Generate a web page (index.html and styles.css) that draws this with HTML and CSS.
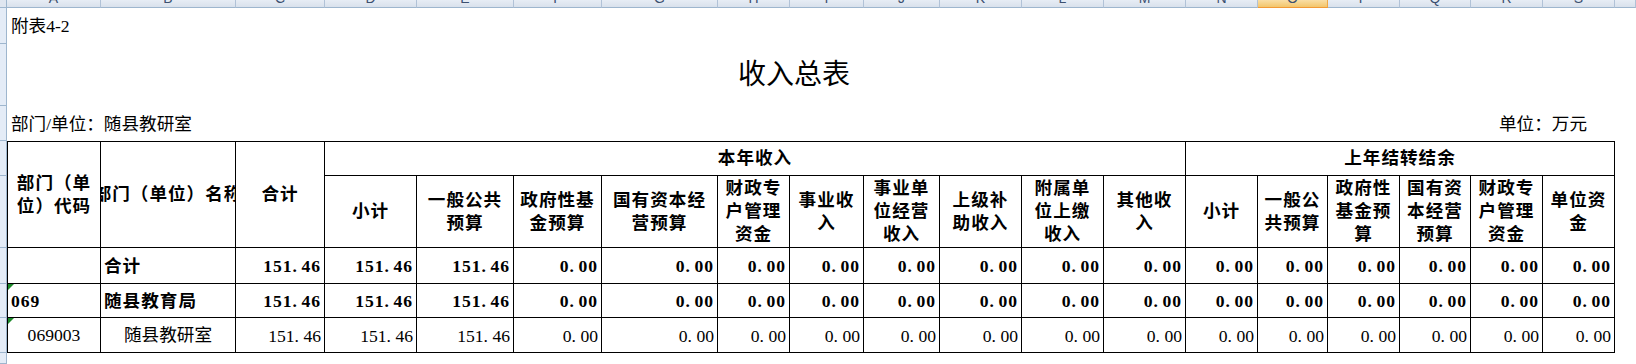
FILE: index.html
```html
<!DOCTYPE html>
<html lang="zh-CN">
<head>
<meta charset="utf-8">
<title>收入总表</title>
<link rel="stylesheet" href="styles.css">
</head>
<body>
<div class="sheet">
  <div class="corner"></div>
  <div class="ch"><span>A</span></div>
  <div class="ch"><span>B</span></div>
  <div class="ch"><span>C</span></div>
  <div class="ch"><span>D</span></div>
  <div class="ch"><span>E</span></div>
  <div class="ch"><span>F</span></div>
  <div class="ch"><span>G</span></div>
  <div class="ch"><span>H</span></div>
  <div class="ch"><span>I</span></div>
  <div class="ch"><span>J</span></div>
  <div class="ch"><span>K</span></div>
  <div class="ch"><span>L</span></div>
  <div class="ch"><span>M</span></div>
  <div class="ch"><span>N</span></div>
  <div class="ch sel"><span>O</span></div>
  <div class="ch"><span>P</span></div>
  <div class="ch"><span>Q</span></div>
  <div class="ch"><span>R</span></div>
  <div class="ch"><span>S</span></div>
  <div class="ch"><span></span></div>

  <div class="rh"></div>
  <div class="p span19">附表4-2</div>

  <div class="rh"></div>
  <div class="title span19">收入总表</div>

  <div class="rh"></div>
  <div class="p span17">部门/单位：随县教研室</div>
  <div class="p unit span2">单位：万元</div>

  <div class="rh"></div>
  <div class="c hd l t rs2">部门（单位）代码</div>
  <div class="c hd t rs2 clip"><span>部门（单位）名称</span></div>
  <div class="c hd t rs2">合计</div>
  <div class="c hd t span10">本年收入</div>
  <div class="c hd t span6">上年结转结余</div>

  <div class="rh"></div>
  <div class="c hd">小计</div>
  <div class="c hd">一般公共预算</div>
  <div class="c hd">政府性基金预算</div>
  <div class="c hd">国有资本经营预算</div>
  <div class="c hd">财政专户管理资金</div>
  <div class="c hd">事业收入</div>
  <div class="c hd">事业单位经营收入</div>
  <div class="c hd">上级补助收入</div>
  <div class="c hd">附属单位上缴收入</div>
  <div class="c hd">其他收入</div>
  <div class="c hd">小计</div>
  <div class="c hd">一般公共预算</div>
  <div class="c hd">政府性基金预算</div>
  <div class="c hd">国有资本经营预算</div>
  <div class="c hd">财政专户管理资金</div>
  <div class="c hd">单位资金</div>

  <div class="rh"></div>
  <div class="c l b txt"></div>
  <div class="c b txt">合计</div>
  <div class="c b num">151<span class="pt">.</span>46</div>
  <div class="c b num">151<span class="pt">.</span>46</div>
  <div class="c b num">151<span class="pt">.</span>46</div>
  <div class="c b num">0<span class="pt">.</span>00</div>
  <div class="c b num">0<span class="pt">.</span>00</div>
  <div class="c b num">0<span class="pt">.</span>00</div>
  <div class="c b num">0<span class="pt">.</span>00</div>
  <div class="c b num">0<span class="pt">.</span>00</div>
  <div class="c b num">0<span class="pt">.</span>00</div>
  <div class="c b num">0<span class="pt">.</span>00</div>
  <div class="c b num">0<span class="pt">.</span>00</div>
  <div class="c b num">0<span class="pt">.</span>00</div>
  <div class="c b num">0<span class="pt">.</span>00</div>
  <div class="c b num">0<span class="pt">.</span>00</div>
  <div class="c b num">0<span class="pt">.</span>00</div>
  <div class="c b num">0<span class="pt">.</span>00</div>
  <div class="c b num">0<span class="pt">.</span>00</div>

  <div class="rh"></div>
  <div class="c l b txt flag">069</div>
  <div class="c b txt">随县教育局</div>
  <div class="c b num">151<span class="pt">.</span>46</div>
  <div class="c b num">151<span class="pt">.</span>46</div>
  <div class="c b num">151<span class="pt">.</span>46</div>
  <div class="c b num">0<span class="pt">.</span>00</div>
  <div class="c b num">0<span class="pt">.</span>00</div>
  <div class="c b num">0<span class="pt">.</span>00</div>
  <div class="c b num">0<span class="pt">.</span>00</div>
  <div class="c b num">0<span class="pt">.</span>00</div>
  <div class="c b num">0<span class="pt">.</span>00</div>
  <div class="c b num">0<span class="pt">.</span>00</div>
  <div class="c b num">0<span class="pt">.</span>00</div>
  <div class="c b num">0<span class="pt">.</span>00</div>
  <div class="c b num">0<span class="pt">.</span>00</div>
  <div class="c b num">0<span class="pt">.</span>00</div>
  <div class="c b num">0<span class="pt">.</span>00</div>
  <div class="c b num">0<span class="pt">.</span>00</div>
  <div class="c b num">0<span class="pt">.</span>00</div>

  <div class="rh"></div>
  <div class="c l ctr flag">069003</div>
  <div class="c ctr">随县教研室</div>
  <div class="c num">151<span class="pt">.</span>46</div>
  <div class="c num">151<span class="pt">.</span>46</div>
  <div class="c num">151<span class="pt">.</span>46</div>
  <div class="c num">0<span class="pt">.</span>00</div>
  <div class="c num">0<span class="pt">.</span>00</div>
  <div class="c num">0<span class="pt">.</span>00</div>
  <div class="c num">0<span class="pt">.</span>00</div>
  <div class="c num">0<span class="pt">.</span>00</div>
  <div class="c num">0<span class="pt">.</span>00</div>
  <div class="c num">0<span class="pt">.</span>00</div>
  <div class="c num">0<span class="pt">.</span>00</div>
  <div class="c num">0<span class="pt">.</span>00</div>
  <div class="c num">0<span class="pt">.</span>00</div>
  <div class="c num">0<span class="pt">.</span>00</div>
  <div class="c num">0<span class="pt">.</span>00</div>
  <div class="c num">0<span class="pt">.</span>00</div>
  <div class="c num">0<span class="pt">.</span>00</div>

  <div class="rh"></div>
</div>
</body>
</html>
```

FILE: styles.css
```css
* {
  box-sizing: border-box;
  margin: 0;
  padding: 0;
}

html, body {
  height: 100%;
}

body {
  background: #ffffff;
  color: #000000;
  font-family: "Liberation Serif", "Noto Sans CJK SC", serif;
  font-size: 17.6px;
  overflow: hidden;
}

.sheet {
  display: grid;
  height: 364px;
  grid-template-columns: 7px 94px 135px 89px 92px 97px 88px 116px 72px 74px 76px 82px 82px 82px 72px 70px 72px 71px 72px 72px 1fr;
  grid-template-rows: 8px 36px 62px 35px 35px 72px 36px 34px 35px 1fr;
}

/* spreadsheet chrome */
.corner {
  background: #dfe6f0;
  border-right: 1px solid #9eb6ce;
  border-bottom: 1px solid #9eb6ce;
}

.ch {
  background: linear-gradient(#e7edf5, #d9e1ec);
  border-right: 1px solid #b1c2d7;
  border-bottom: 1px solid #9eb6ce;
  overflow: hidden;
  text-align: center;
  font-family: "Liberation Sans", sans-serif;
  font-size: 14px;
  line-height: 14px;
  color: #3c5070;
}

.ch span {
  display: block;
  margin-top: -9px;
  height: 14px;
}

.ch.sel {
  background: linear-gradient(#f9dea6, #f3c66b);
  border-right-color: #f0a844;
  border-bottom-color: #f29a36;
}

.rh {
  grid-column: 1;
  background: #e4ecf7;
  border-right: 1px solid #9eb6ce;
  border-bottom: 1px solid #9eb6ce;
}

/* free text rows */
.p {
  display: flex;
  align-items: center;
  padding: 0 4px;
  white-space: nowrap;
  line-height: 22px;
}

.unit {
  justify-content: center;
}

.title {
  display: flex;
  align-items: center;
  justify-content: center;
  padding-right: 34px;
  font-size: 28px;
  line-height: 34px;
  white-space: nowrap;
}

.span19 { grid-column: span 19; }
.span17 { grid-column: span 17; }
.span10 { grid-column: span 10; }
.span6 { grid-column: span 6; }
.span2 { grid-column: span 2; }
.rs2 { grid-row: span 2; }

/* table cells */
.c {
  position: relative;
  display: flex;
  align-items: center;
  border-right: 1px solid #000;
  border-bottom: 1px solid #000;
  overflow: hidden;
  padding: 0 5px;
  line-height: 23px;
  white-space: nowrap;
}

.c.l { border-left: 1px solid #000; }
.c.t { border-top: 1px solid #000; }

.hd {
  font-weight: bold;
  letter-spacing: 1px;
  justify-content: center;
  text-align: center;
  white-space: normal;
}

.clip {
  white-space: nowrap;
}

.clip span {
  flex: none;
}

.b {
  font-weight: bold;
  letter-spacing: 1px;
}

.txt {
  padding: 1px 4px 0 3px;
}

.ctr {
  justify-content: center;
  padding-top: 1px;
}

.num {
  justify-content: flex-end;
  padding: 2px 3px 0 0;
}

.pt {
  display: inline-block;
  width: 8.8px;
}

.flag::before {
  content: "";
  position: absolute;
  left: 0;
  top: 0;
  border-top: 6px solid #1d8a2a;
  border-right: 6px solid transparent;
}
```
